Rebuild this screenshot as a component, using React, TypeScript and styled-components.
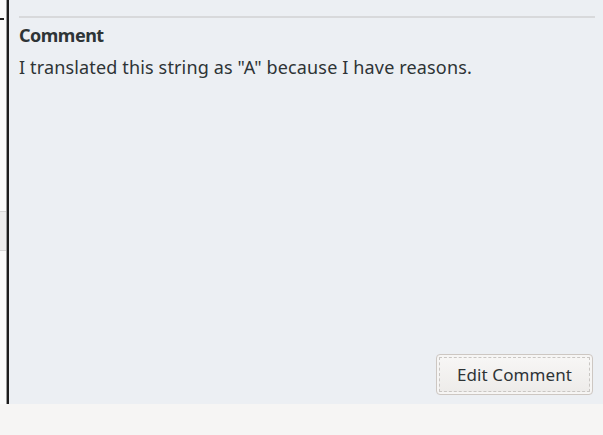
import React from 'react';
import styled, { createGlobalStyle } from 'styled-components';

const GlobalStyle = createGlobalStyle`
  html, body {
    margin: 0;
    padding: 0;
    background: #f6f5f4;
    font-family: 'Noto Sans', 'DejaVu Sans', sans-serif;
  }
`;

const Window = styled.div`
  width: 603px;
  height: 435px;
  display: flex;
  flex-direction: column;
  background: #f6f5f4;
  overflow: hidden;
`;

const Top = styled.div`
  display: flex;
  height: 404px;
`;

const SideStrip = styled.div`
  width: 6px;
  display: flex;
  flex-direction: column;
  background: #fafafa;
`;

const StripMark = styled.div`
  margin-top: 18px;
  width: 4px;
  height: 2px;
  background: #222;
`;

const StripRow = styled.div`
  margin-top: 191px;
  height: 38px;
  border-top: 1px solid #d6d6d6;
  border-bottom: 1px solid #d6d6d6;
  background: #ededed;
`;

const Divider = styled.div`
  width: 3px;
  background: #1c1c1c;
  border-left: 1px solid #9a9a9a;
  box-sizing: border-box;
`;

const Panel = styled.div`
  flex: 1;
  background: #eceff3;
  display: flex;
  flex-direction: column;
  padding: 16px 10px 9px 10px;
`;

const Rule = styled.div`
  height: 2px;
  background: #d8d9db;
  margin-right: -2px;
`;

const Title = styled.div`
  margin-top: 5px;
  font-size: 18px;
  font-weight: 700;
  letter-spacing: -0.5px;
  color: #2e3436;
  line-height: 24px;
`;

const Body = styled.div`
  margin-top: 8px;
  font-size: 18px;
  color: #2e3436;
  line-height: 24px;
  letter-spacing: 0.15px;
`;

const Actions = styled.div`
  margin-top: auto;
  display: flex;
  justify-content: flex-end;
`;

const Button = styled.button`
  width: 157px;
  height: 41px;
  border: 1px solid #cdc7c2;
  border-radius: 4px;
  background: linear-gradient(#f8f7f6, #edebe9);
  box-shadow: inset 0 0 0 2px #f6f5f4;
  outline: 1px dashed #c9c6c3;
  outline-offset: -4px;
  font-family: 'Noto Sans', 'DejaVu Sans', sans-serif;
  font-size: 17px;
  letter-spacing: 0.1px;
  color: #2e3436;
  padding: 0;
`;

export default function App() {
  return (
    <Window>
      <GlobalStyle />
      <Top>
        <SideStrip>
          <StripMark />
          <StripRow />
        </SideStrip>
        <Divider />
        <Panel>
          <Rule />
          <Title>Comment</Title>
          <Body>I translated this string as "A" because I have reasons.</Body>
          <Actions>
            <Button>Edit Comment</Button>
          </Actions>
        </Panel>
      </Top>
    </Window>
  );
}
